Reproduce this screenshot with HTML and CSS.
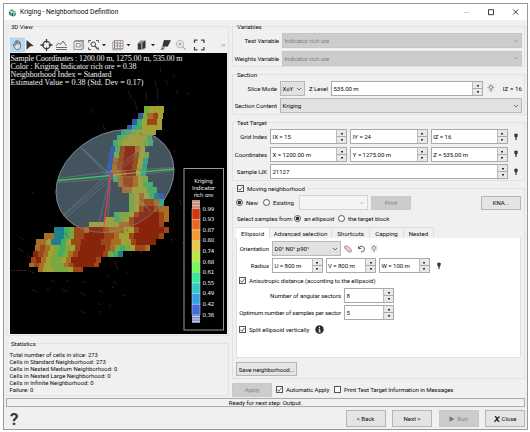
FILE: index.html
```html
<!DOCTYPE html>
<html lang="en">
<head>
<meta charset="utf-8">
<title>Kriging - Neighborhood Definition</title>
<link rel="stylesheet" href="styles.css">
</head>
<body>
<svg width="0" height="0" class="defs">
  <symbol id="chev" viewBox="0 0 6 6"><path d="M1 2l2 2 2-2" fill="none" stroke="currentColor" stroke-width=".8"/></symbol>
  <symbol id="tick" viewBox="0 0 8 8"><path d="M1.5 4l1.8 2 3.2-4" fill="none" stroke="#333" stroke-width=".9"/></symbol>
  <symbol id="pin" viewBox="0 0 6 8"><path d="M1.2 1.2Q3 0 4.800 1.200L4.500 3.700 3.600 4.800V7H2.400V4.800L1.500 3.700Z" fill="#40342f"/></symbol>
  <symbol id="bulb" viewBox="0 0 8 9"><path d="M2.600 3.800a1.500 1.500 0 1 1 2.800 0L4.700 5.200H3.300ZM3.200 6.200h1.600M3.400 7.400h1.200M4 .2v1M.6 3.500h1M6.400 3.500h1M1.500 1.200l.7.600M6.500 1.200l-.7.600M1.500 5.800l.7-.6M6.500 5.800l-.7-.6" fill="none" stroke="#655b56" stroke-width=".7"/></symbol>
</svg>
<div class="window">
  <header class="titlebar">
    <svg class="logo" viewBox="0 0 9 9"><path d="M1 3L4 1.200 6 2 3 3.600Z" fill="#47a447"/><path d="M.7 3.500L2.700 4.200V8L1.500 7Z" fill="#1e5f60"/><path d="M3.300 4L5.800 2.600 8 4 6 5Z" fill="#69b544"/><path d="M3.400 4.800L5.500 5.600V8.600L3.400 8Z" fill="#224853"/><path d="M6 5.600L8 4.700V7L6 8.400Z" fill="#37a0a4"/></svg>
    <span class="title">Kriging - Neighborhood Definition</span>
    <svg class="winbtns" viewBox="0 0 56 8"><path d="M1 4.500h5" stroke="#bbb" stroke-width=".7"/><path d="M25.500 1.700h5v5h-5z" fill="none" stroke="#222" stroke-width=".9"/><path d="M50.200 1.500l5 5m0-5l-5 5" stroke="#222" stroke-width=".9"/></svg>
  </header>
  <div class="main">
    <div class="left">
      <section class="group view">
        <h2>3D View</h2>
        <svg class="tools" viewBox="0 0 220 16">
          <rect x="1.500" y="1" width="14" height="14" fill="#b9d9f2" stroke="#9ccbf0" stroke-width=".5"/>
          <path d="M5 9.500L4 7.500 5 7 6.200 8.500V4.500q.8-.7 1.200 0V3.800q.8-.8 1.400 0v.6q.9-.6 1.400.2v.8q1-.5 1.200.4V9.500q0 3-3 3.300-2.200 0-3.400-3.300M7.400 4.500v3M8.800 4.500v3M10.200 5v2.600" fill="#d7e4ee" stroke="#594c47" stroke-width=".75"/>
          <path d="M17.500 3L24.700 9 21.300 9.300 17.500 12.800Z" fill="#40342f"/>
          <circle cx="37.500" cy="8" r="3.700" fill="none" stroke="#40342f" stroke-width="1.200"/><path d="M37.500 2v3.800M37.500 10.200V14M31.500 8h3.800M39.700 8h3.800" stroke="#40342f" stroke-width="1.300"/>
          <path d="M47 9l2.500-3 2 1.500L54 4l3.500 5M47 10.500h11M47 12.500h11" fill="none" stroke="#665b56" stroke-width=".9"/>
          <path d="M65 4.500h8v8h-8zM65 4.500l1.500-1h8l-1.500 1M74.500 3.500v8l-1.500 1M67.200 6.500h4v3.500h-4z" fill="none" stroke="#857b76" stroke-width=".8"/>
          <path d="M79.500 5.500V3.500h2.500M87 3.500h2.500v2M79.500 10.500v2H82M89.500 10.500v2h-1" fill="none" stroke="#50443f" stroke-width=".9"/><circle cx="84.300" cy="7.300" r="2.300" fill="none" stroke="#50443f"/><path d="M86 9l2.500 3" stroke="#50443f" stroke-width="1.200"/>
          <path d="M93 7h4l-2 2.200ZM117.500 7h4l-2 2.200ZM142 7h4l-2 2.200Z" fill="#222"/>
          <path d="M105.500 3.500h8.500v8h-8.500zM108.300 3.500v8M111.200 3.500v8M105.500 6.200h8.500M105.500 8.900h8.500M103.800 12.500l1.700-1V3.500L103.800 5zM103.800 12.800h8.500l1.700-1.200" fill="none" stroke="#7b706b" stroke-width=".65"/>
          <path d="M128.500 6.500l3-3h5.500v7l-2 2h-6.500z" fill="#978f8b"/><path d="M129 6.500h3v6h-3zM133.500 6l2.500-2.500v7L133.500 12z" fill="#40342f"/>
          <path d="M155 3l7 .2-3.200 6.200-5.600.3Z" fill="#3f332e"/><path d="M152.700 10.300l3.300.2-1.200 2-3.300.4Z" fill="#7d736e"/>
          <circle cx="171" cy="7" r="3.700" fill="none" stroke="#b9b5b3"/><path d="M173.700 9.700l3 3.200M169.300 7h3.500M171 5.300v3.500" stroke="#aaa5a2" stroke-width="1.200"/>
          <path d="M185.500 6V3.200h3M192 3.200h3V6M185.500 10v2.800h3M195 10v2.800h-3" fill="none" stroke="#50443f" stroke-width="1.300"/>
          <path d="M212.500 7l1.200 1.200-1.200 1.200M214.500 7l1.200 1.200-1.200 1.200" fill="none" stroke="#777" stroke-width=".6"/>
        </svg>
        <svg class="scene" viewBox="10 52.500 217 281">
          <rect x="10" y="52" width="217" height="282" fill="#000"/>
          <g id="specks"></g>
          <ellipse cx="115" cy="180.500" rx="61.900" ry="48" transform="rotate(-28.500 115 180.500)" fill="#3b4c57" stroke="#6d7a80" stroke-width=".6"/>
          <g id="cells" shape-rendering="crispEdges"></g>
          <g id="marks"></g>
          <ellipse cx="115" cy="180.500" rx="61.900" ry="48" transform="rotate(-28.500 115 180.500)" fill="#8a98a0" fill-opacity=".12" stroke="#9aa5a5" stroke-opacity=".55" stroke-width=".7"/>
          <path d="M111 175L81 147M111 175L84 149M107 175L81 147M111 175L156 136M109 172L153 139M113 176L157 138M111 175L63 216M107 174L63 215M112 178L66 217M111 175L151 211M112 172L148 208M110 175L98 227M58 178L111 171M58 182L111 178M111 171L174 167M111 178L174 170M111 175L107 230" stroke="#8e999e" stroke-opacity=".6" stroke-width=".6" fill="none"/>
          <path d="M58 180L111 175M142 171.500L174 168.500" stroke="#3fc35c" stroke-width="1.400"/><path d="M111 175L142 171.500" stroke="#a5c54a" stroke-width=".9"/>
          <path d="M110.500 174L104.500 220" stroke="#c84352" stroke-width="1.600"/><path d="M105 216L103.500 231" stroke="#d84a38" stroke-width=".8"/>
          <path d="M108 174l5-3v6Z" fill="#9c5278"/>
          <g class="info">
            <text x="10.500" y="60.500" textLength="172">Sample Coordinates : 1200.00 m, 1275.00 m, 535.00 m</text>
            <text x="10.500" y="68.600" textLength="126">Color : Kriging Indicator rich ore = 0.38</text>
            <text x="10.500" y="76.700" textLength="101">Neighborhood Index = Standard</text>
            <text x="10.500" y="84.800" textLength="133">Estimated Value = 0.38 (Std. Dev = 0.17)</text>
          </g>
          <rect x="184" y="168" width="39.500" height="161.500" fill="#000" stroke="#999" stroke-width="1"/>
          <g class="legend" id="legend">
            <text x="203.500" y="182" text-anchor="middle">Kriging</text>
            <text x="203.500" y="189" text-anchor="middle">Indicator</text>
            <text x="203.500" y="196" text-anchor="middle">rich ore</text>
          </g>
        </svg>
      </section>
      <section class="group stats">
        <h2>Statistics</h2>
        <p>Total number of cells in slice: 273</p>
        <p>Cells in Standard Neighborhood: 273</p>
        <p>Cells in Nested Medium Neighborhood: 0</p>
        <p>Cells in Nested Large Neighborhood: 0</p>
        <p>Cells in Infinite Neighborhood: 0</p>
        <p>Failure: 0</p>
      </section>
    </div>
    <div class="right">
      <section class="group variables">
        <h2>Variables</h2>
        <div class="row"><label class="lab">Test Variable</label><div class="combo off grow">Indicator rich ore<svg><use href="#chev"/></svg></div></div>
        <div class="row"><label class="lab">Weights Variable</label><div class="combo off grow">Indicator rich ore<svg><use href="#chev"/></svg></div></div>
      </section>
      <section class="group slice">
        <h2>Section</h2>
        <div class="row"><label class="lab">Slice Mode</label><div class="combo mode">XoY<svg><use href="#chev"/></svg></div><span class="zl">Z Level</span><div class="spin level">535.00 m<i></i></div><svg class="ico bulb"><use href="#bulb"/></svg><span class="iz">IZ = 16</span></div>
        <div class="row"><label class="lab">Section Content</label><div class="combo grow">Kriging<svg><use href="#chev"/></svg></div></div>
      </section>
      <section class="group target">
        <h2>Test Target</h2>
        <div class="row"><label class="lab">Grid Index</label><div class="spin">IX = 15<i></i></div><div class="spin">IY = 24<i></i></div><div class="spin">IZ = 16<i></i></div><svg class="ico"><use href="#pin"/></svg></div>
        <div class="row"><label class="lab">Coordinates</label><div class="spin">X = 1200.00 m<i></i></div><div class="spin">Y = 1275.00 m<i></i></div><div class="spin">Z = 535.00 m<i></i></div><svg class="ico"><use href="#pin"/></svg></div>
        <div class="row"><label class="lab">Sample IJK</label><div class="spin">21127<i></i></div><svg class="ico"><use href="#pin"/></svg></div>
      </section>
      <section class="group moving">
        <h2><span class="check"><svg><use href="#tick"/></svg></span>Moving neighborhood</h2>
        <div class="row first"><span class="radio on"></span><span class="new">New</span><span class="radio"></span><span class="existing">Existing</span><div class="combo blank"><svg><use href="#chev"/></svg></div><button class="btn off print">Print</button><button class="btn kna">KNA...</button></div>
        <div class="row from"><span class="selfrom">Select samples from:</span><span class="radio on"></span><span class="ell">an ellipsoid</span><span class="radio"></span><span>the target block</span></div>
        <nav class="tabs"><span class="active">Ellipsoid</span><span>Advanced selection</span><span>Shortcuts</span><span>Capping</span><span>Nested</span></nav>
        <div class="pane">
          <div class="row"><label class="lab">Orientation</label><div class="combo orient">D0° N0° p90°<svg><use href="#chev"/></svg></div>
            <svg class="orienticons" viewBox="0 0 38 10"><ellipse cx="5" cy="5" rx="4.200" ry="2" transform="rotate(40 5 5)" fill="#f2d8e8" stroke="#b36aa6" stroke-width=".8"/><path d="M2.500 3.500l5 4" stroke="#d9a23c" stroke-width=".7"/><path d="M16 4.200A2.800 2.800 0 1 1 18 7.800M15.300 2.300l.5 2.500 2.500-.4" fill="none" stroke="#51453f" stroke-width=".9"/><use href="#bulb" x="27" y=".5" width="8" height="9"/></svg></div>
          <div class="row radius"><label class="lab">Radius</label><div class="spin">U = 800 m<i></i></div><div class="spin">V = 800 m<i></i></div><div class="spin">W = 100 m<i></i></div><svg class="ico"><use href="#pin"/></svg></div>
          <div class="row chk"><span class="check"><svg><use href="#tick"/></svg></span>Anisotropic distance (according to the ellipsoid)</div>
          <div class="row wide"><label class="lab">Number of angular sectors</label><div class="spin">8<i></i></div></div>
          <div class="row wide"><label class="lab">Optimum number of samples per sector</label><div class="spin">5<i></i></div></div>
          <div class="row chk"><span class="check"><svg><use href="#tick"/></svg></span>Split ellipsoid vertically<svg class="information" viewBox="0 0 10 10"><circle cx="5" cy="5" r="4.700" fill="#342b27"/><path d="M5 2v1.300M4 4.500h1.200v3M3.900 7.500h2.400" stroke="#fff" stroke-width="1.100" fill="none"/></svg></div>
        </div>
        <button class="btn save">Save neighborhood...</button>
      </section>
      <div class="row apply"><button class="btn off">Apply</button><span class="check"><svg><use href="#tick"/></svg></span><span class="auto">Automatic Apply</span><span class="check"></span><span>Print Test Target Information in Messages</span></div>
    </div>
  </div>
  <div class="status">Ready for next step: Output.</div>
  <footer class="foot"><span class="help">?</span><button class="btn">&lt; Back</button><button class="btn">Next &gt;</button><button class="btn off"><svg viewBox="0 0 6 6"><path d="M.5.2L5.500 3 .5 5.800Z" fill="#777"/></svg>Run</button><button class="btn"><svg viewBox="0 0 6 6"><path d="M.8.3Q2 .3 3 3T5.300 5.500M5.500.5L.5 5.700" fill="none" stroke="#222" stroke-width="1.300"/></svg>Close</button></footer>
</div>
<script src="scene.js"></script>
</body>
</html>
```
FILE: styles.css
```css
* { box-sizing: border-box; }
body { margin: 0; width: 530px; height: 432px; background: #fff; overflow: hidden; font: 6.1px/7px Roboto, "Liberation Sans", sans-serif; letter-spacing: -.06px; color: #0c0c0c; white-space: nowrap; }
.defs { display: block; }
.window { margin: 3px 0 0 3px; width: 525px; height: 427px; border: 1px solid #999; background: #f0f0f0; display: flex; flex-direction: column; }
.titlebar { height: 16px; background: #fff; display: flex; align-items: center; padding: 0 8px 0 4px; flex: none; }
.logo { width: 9px; height: 9px; margin-right: 3px; }
.title { font-size: 6.7px; letter-spacing: 0; flex: 1; }
.winbtns { width: 56px; height: 8px; }
.main { display: flex; height: 378px; flex: none; padding: 6px 2px 0; gap: 3px; }
.left { width: 223px; }
.right { width: 293px; }
.group { border: 1px solid #e2e2e2; }
h2 { margin: -4px 0 0 4px; font: inherit; width: fit-content; background: #f0f0f0; height: 7px; display: flex; align-items: center; }
p { margin: 0; }
.view { height: 310px; margin-bottom: 7px; }
.tools { display: block; width: 220px; height: 16px; margin: 7px 0 0 2px; }
.scene { display: block; width: 217px; height: 281px; margin: -.5px 0 0 3px; }
.info { fill: #eee; font: 8px "Liberation Serif", serif; letter-spacing: 0; }
.legend { fill: #eee; font: 5.500px "DejaVu Sans", sans-serif; letter-spacing: -.15px; }
.stats { height: 53px; }
.stats h2 { margin-bottom: 5px; }
.stats p { margin-left: 2.500px; font-size: 5.900px; letter-spacing: .02px; line-height: 7px; }

.row { display: flex; align-items: center; height: 15px; flex: none; }
.lab { text-align: right; padding-right: 3px; flex: none; }
.grow { flex: 1; }
.combo, .spin { height: 15px; border: 1px solid #b8b8b8; display: flex; align-items: center; justify-content: space-between; padding-left: 1.500px; }
.combo { background: #e1e1e1; padding-right: 2px; }
.combo svg { width: 6px; height: 6px; color: #555; }
.combo.off { background: #ccc; border-color: #c6c6c6; color: #808080; }
.off svg { color: #999; }
.spin { background: #fff; border-color: #aaa; }
.spin i { width: 10px; height: 13px; flex: none; border-left: 1px solid #bbb; background:
  linear-gradient(#333, #333) 50% 3px / 2px 1.500px no-repeat,
  linear-gradient(#333, #333) 50% 9px / 2px 1.500px no-repeat,
  linear-gradient(#aaa, #aaa) 0 6px / 100% 1px no-repeat, #e8e8e8; }
.ico { width: 6px; height: 8px; margin-left: 5px; flex: none; }

.variables { height: 41px; margin-bottom: 7px; padding-right: 2px; }
.variables .row { margin-bottom: 2.500px; }
.variables h2, .slice h2, .target h2 { margin-bottom: 3px; }
.variables .lab { width: 49px; }
.slice { height: 41px; margin-bottom: 7px; padding-right: 2px; }
.slice .row { margin-bottom: 2px; }
.slice .lab { width: 47px; }
.mode { width: 25px; }
.zl { width: 26px; padding-left: 4px; }
.level { width: 152px; }
.bulb { width: 8px; height: 9px; margin-left: 4px; }
.iz { flex: 1; text-align: right; letter-spacing: .1px; }
.target { height: 59px; margin-bottom: 7px; }
.target .row { margin-bottom: 2.500px; gap: 3px; padding-right: 5px; }
.target .lab { width: 34px; padding: 0; }
.target .spin { flex: 1; }
.target .ico { margin-left: 2px; }

.moving { height: 191px; }
.moving h2 { padding-right: 2px; }
.check { width: 7px; height: 7px; border: 1px solid #555; background: #fff; flex: none; margin-right: 3px; display: flex; }
.check svg { width: 7px; height: 7px; margin: -1px; flex: none; }
.first { margin: 3px 3px 0 3px; }
.radio { width: 7px; height: 7px; border: 1px solid #555; border-radius: 50%; background: #fff; margin-right: 3px; flex: none; }
.radio.on { background: radial-gradient(circle, #333 1.500px, #fff 2.200px); }
.new { width: 17px; }
.existing { width: 26px; }
.combo.blank { width: 69px; border-color: #d5d5d5; background: #f4f4f4; color: #bbb; }
.blank svg { margin-left: auto; color: #bbb; }
.btn { font: inherit; letter-spacing: inherit; color: inherit; background: #e4e4e4; border: 1px solid #b5b5b5; padding: 0; height: 14px; width: 40px; display: flex; align-items: center; justify-content: center; }
.btn.off { background: #ccc; border-color: #c8c8c8; color: #858585; }
.print { margin-left: 3px; }
.kna { margin-left: auto; }
.from { padding-left: 4px; height: 16px; }
.selfrom { width: 57px; }
.ell { width: 34px; }
.tabs { display: flex; margin: 1px 0 0 3px; height: 11px; }
.tabs span { height: 11px; padding-top: 2px; border: 1px solid #dedede; border-left: 0; border-bottom: 0; text-align: center; width: 34px; letter-spacing: .04px; }
.tabs .active { background: #fff; }
.tabs span:nth-child(2) { width: 62px; }
.tabs span:nth-child(3) { width: 38px; }
.tabs span:nth-child(5) { width: 30px; }
.pane { margin-left: 3px; width: 285px; height: 120px; background: #fff; border: 1px solid #ddd; border-top: 0; padding: 3px 0 0 2px; }
.pane .lab { width: 33px; }
.orient { width: 69px; }
.orienticons { width: 38px; height: 10px; margin-left: 2px; }
.radius { margin-top: 2px; gap: 3px; }
.pane .radius .lab { width: 30px; padding: 0; }
.radius .spin { width: 50.500px; }
.radius .ico { margin-left: 3px; }
.chk { height: 15px; }
.pane .wide .lab { width: 105px; padding-right: 3px; }
.pane .wide + .wide .lab { letter-spacing: -.17px; }
.wide { margin-bottom: 2px; }
.wide .spin { width: 50px; }
.information { width: 9px; height: 9px; margin-left: 6px; }
.save { width: 61px; margin: 4px 0 0 3px; }
.apply { margin-top: 3px; letter-spacing: -.1px; }
.apply .btn { margin-right: 4px; }
.auto { width: 48px; }

.status { height: 9px; margin: 0 2px; border: 1px solid #aaa; text-align: center; line-height: 7px; flex: none; }
.foot { display: flex; gap: 6.500px; padding: 3px 2px 0 6px; }
.foot .btn { height: 17px; }
.foot .btn svg { width: 6px; height: 6px; margin-right: 2px; }
.help { flex: 1; font-size: 17px; line-height: 18px; font-weight: 700; color: #40342f; }
```
FILE: scene.js
```js
const NS = 'http://www.w3.org/2000/svg';
function add(parent, tag, attrs, text) {
  const el = document.createElementNS(NS, tag);
  for (const k in attrs) el.setAttribute(k, attrs[k]);
  if (text) el.textContent = text;
  parent.appendChild(el);
}

// Block model slice: [top, height, left, colour codes], one code per 5px cell.
const colors = { r: '#89240c', o: '#9c4717', b: '#a86e28', y: '#a3a136', g: '#78a941', G: '#43ad68', t: '#2fa38d', c: '#207f8c', B: '#3259ac' };
const rows = [
  [105.5, 6.5, 144, 'gyyy'], [112, 6, 138, 'Bgboy'], [118, 6, 132, 'BGyooy'],
  [124, 5, 127, 'BtGyyyy'], [129, 5, 121, 'tGgyyyy'], [134, 5, 117, 'GgyyyyG'],
  [139, 6, 113, 'GgyyyygG'], [145, 6, 110, 'BGorrby'], [151, 6, 109, 'Bgorroyg'],
  [157, 6, 108, 'Bborroyt'], [163, 6, 107, 'Bborroyt'], [169, 6, 106, 'Bbborryt'],
  [175, 6, 113, 'Gboobyg'], [181, 5, 118, 'boobyGG'], [186, 6, 122, 'bbyyyGG'],
  [192, 6, 129, 'gybyGcB'], [198, 7, 129, 'gyboobt'], [205, 6, 129, 'gyorrobb'],
  [211, 5, 114, 'Gggyorrrrob'], [216, 5, 104, 'yyGgyorrrrrob'], [221, 5, 89, 'yyyyyybborrrrro'],
  [226, 6, 54, 'ccGgoobrrrobbbyyorrrrro'], [232, 6, 44, 'bbccGgoorrrroobyyorrrrro'],
  [238, 6, 36, 'bbyccGyoorrrroobbyyorrrr'], [244, 6, 35, 'bobygGgyorrrrrobgGgyoob'],
  [250, 6, 33, 'robygGgborrrrrogGc'], [256, 6, 31, 'orbyggybrrrrro'],
  [262, 4, 29, 'bobygggborrrro'], [266, 5, 38, 'byygggyoo']
];
const cells = document.getElementById('cells');
for (const [y, h, x, codes] of rows) {
  [...codes].forEach((c, i) => add(cells, 'rect', { x: x + i * 5, y, width: 5, height: h, fill: colors[c] }));
}

// Drillhole samples: [x, y, length, direction] with alternating grades.
const specks = document.getElementById('specks');
const samples = [[128,90,9,1.2],[134,100,10,1.2],[146,92,8,1.5],[157,88,12,1.5],[158,103,9,1.5],[166,80,4,1.2],[173,75,3,1],[176,90,4,1],[188,92,3,1],[92,109,4,1],[103,125,6,1.1],[32,192,2,.5],[155,80,6,1.4],[160,67,5,1.4],[179,199,6,1.2],[171,238,4,1.2],[182,242,3,.5],[170,213,2,.5],[20,237,6,.5],[18,248,6,.5],[27,255,5,.5],[11,270,5,0],[17,270,9,0],[30,271,4,.4],[32,289,6,.4],[47,289,3,.2],[62,289,6,.4],[66,280,3,.3],[83,281,3,.3],[80,292,7,.5],[99,290,4,.5],[113,281,4,.5],[112,286,3,.5],[122,294,4,.4],[98,303,3,.4],[109,305,2,.4],[98,311,3,.4],[81,311,4,.4],[115,260,10,1.3],[130,253,3,.8],[126,271,3,.8],[106,274,3,.8],[51,280,4,.4],[152,149,4,1.2],[161,160,3,1.2],[165,189,4,1.2],[164,205,6,1.2],[174,150,3,1.2]];
samples.forEach(([x, y, l, a], i) => add(specks, 'path', {
  d: `M${x} ${y}l${l * Math.cos(a)} ${l * Math.sin(a)}`,
  stroke: i % 3 ? '#74301f' : '#263c78', 'stroke-width': .7, 'stroke-dasharray': '1.6 .8'
}));
const markGroup = document.getElementById('marks');
const marks = [[147,113],[155,111],[140,132],[145,145],[125,153],[139,168],[108,155],[116,162],[157,176],[141,198],[156,198],[46,237],[65,232],[82,244],[104,234],[126,228],[134,221],[140,250],[121,230],[43,251],[112,249]];
marks.forEach(([x, y], i) => add(markGroup, 'path', { d: `M${x} ${y}l2 3`, stroke: i % 2 ? '#7a3424' : '#4b4a42', 'stroke-width': .6 }));

// Colour scale, high to low.
const legend = document.getElementById('legend');
const scale = ['#d8330b', '#ed661c', '#f49a31', '#ebcb42', '#b6ed3d', '#77fb5b', '#32ed91', '#2dcac8', '#359ee6', '#426bde'];
add(legend, 'rect', { x: 192, y: 199.5, width: 8, height: 9, fill: '#c98d80' });
add(legend, 'path', { d: 'M192 202h8M192 205h8', stroke: '#e8cbc4', 'stroke-width': .7 });
scale.forEach((c, i) => add(legend, 'rect', { x: 192, y: 208.3 + i * 10.6, width: 8, height: 10.6, fill: c, stroke: '#ddd', 'stroke-width': .5 }));
add(legend, 'rect', { x: 192, y: 314, width: 8, height: 8.5, fill: '#7f91c9' });
add(legend, 'path', { d: 'M192 316h8M192 318.500h8M192 321h8', stroke: '#e0e4f2', 'stroke-width': .7 });
['0.99', '0.93', '0.87', '0.80', '0.74', '0.68', '0.61', '0.55', '0.49', '0.42', '0.36'].forEach((t, i) =>
  add(legend, 'text', { x: 202.5, y: 210 + i * 10.6 }, t));
```
